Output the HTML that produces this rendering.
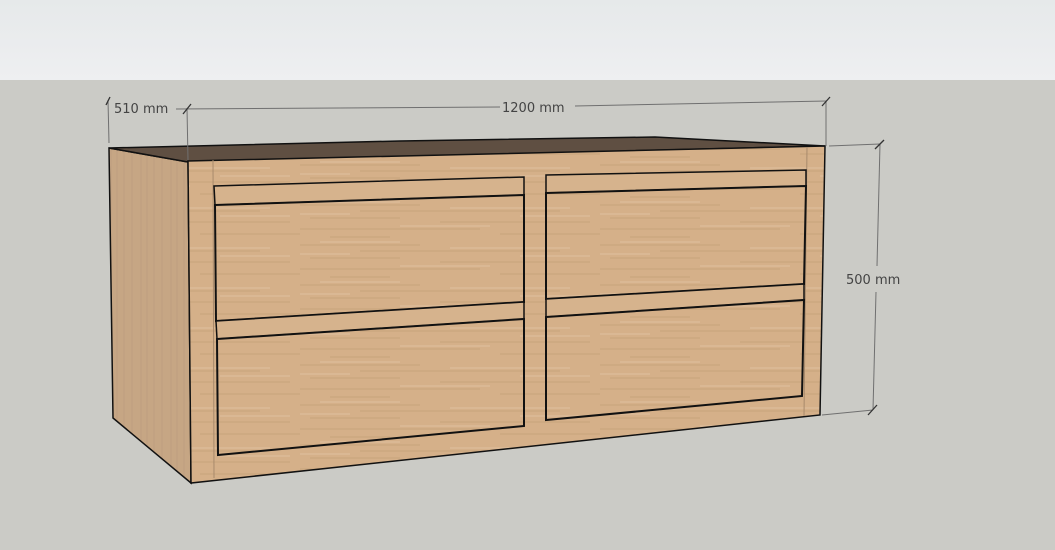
<!DOCTYPE html>
<html><head><meta charset="utf-8"><style>
html,body{margin:0;padding:0;width:1055px;height:550px;overflow:hidden;background:#cbcbc6}
svg{display:block}
text{font-family:"DejaVu Sans","Liberation Sans",sans-serif;font-size:13px;fill:#444}
</style></head><body>
<svg width="1055" height="550" viewBox="0 0 1055 550" xmlns="http://www.w3.org/2000/svg">
<defs>
<linearGradient id="sky" x1="0" y1="0" x2="0" y2="1"><stop offset="0" stop-color="#e6e9ea"/><stop offset="1" stop-color="#eeeff1"/></linearGradient>
<pattern id="grain" width="300" height="40" patternUnits="userSpaceOnUse">
<rect width="300" height="40" fill="#d5b089"/>
<path d="M0 5h120M60 11h200M10 18h90M140 22h150M0 29h180M200 34h100M30 37h60" stroke="#c49d76" stroke-width="1.5" opacity=".5"/>
<path d="M20 2h80M150 8h120M0 14h50M100 26h90M220 16h70" stroke="#e0c09c" stroke-width="1.5" opacity=".7"/>
</pattern>
<pattern id="vgrain" width="30" height="300" patternUnits="userSpaceOnUse">
<rect width="30" height="300" fill="#c6a684"/>
<path d="M4 0v300M12 0v300M21 0v300M27 0v300" stroke="#b8977a" stroke-width="1.2" opacity=".5"/>
</pattern>
</defs>
<rect width="1055" height="80" fill="url(#sky)"/>
<rect y="80" width="1055" height="470" fill="#cbcbc6"/>

<polygon points="109,148 188,162 191,483 113,418" fill="url(#vgrain)" stroke="#111" stroke-width="1.5"/>
<polygon points="109,148 400,141 655,137 825,146 188,162" fill="#5f4f42" stroke="#111" stroke-width="1.5"/>
<polygon points="188,161 825,146 820,415 191,483" fill="url(#grain)" stroke="#111" stroke-width="1.5"/>
<g fill="none" stroke="#a88a6c" stroke-width="1"><line x1="213" y1="160" x2="214" y2="478"/><line x1="807" y1="147" x2="804" y2="416"/></g>

<polygon points="214,186 524,177 524,195 215,205" fill="#d6b38d" stroke="#111" stroke-width="1.5"/>
<polygon points="215,205 524,195 524,302 216,321" fill="url(#grain)" stroke="#111" stroke-width="2"/>
<polygon points="216,321 524,302 524,319 217,339" fill="#d6b38d" stroke="#111" stroke-width="1.5"/>
<polygon points="217,339 524,319 524,426 218,455" fill="url(#grain)" stroke="#111" stroke-width="2"/>
<polygon points="546,175 806,170 806,186 546,193" fill="#d6b38d" stroke="#111" stroke-width="1.5"/>
<polygon points="546,193 806,186 804,284 546,299" fill="url(#grain)" stroke="#111" stroke-width="2"/>
<polygon points="546,299 804,284 804,300 546,317" fill="#d6b38d" stroke="#111" stroke-width="1.5"/>
<polygon points="546,317 804,300 802,396 546,420" fill="url(#grain)" stroke="#111" stroke-width="2"/>

<g stroke="#707070" stroke-width="1" fill="none">
<line x1="108" y1="100" x2="109" y2="143"/>
<line x1="187" y1="108" x2="188" y2="160"/>
<line x1="176" y1="109" x2="500" y2="107"/>
<line x1="575" y1="106" x2="827" y2="101"/>
<line x1="826" y1="101" x2="826" y2="146"/>
<line x1="829" y1="146" x2="880" y2="144"/>
<line x1="880" y1="144" x2="877" y2="266"/>
<line x1="876" y1="292" x2="873" y2="410"/>
<line x1="822" y1="415" x2="873" y2="410"/>
</g>
<g stroke="#333" stroke-width="1.3">
<line x1="106" y1="105" x2="110" y2="97"/>
<line x1="183" y1="114" x2="191" y2="104"/>
<line x1="822" y1="106" x2="830" y2="97"/>
<line x1="875" y1="149" x2="884" y2="140"/>
<line x1="868" y1="415" x2="877" y2="405"/>
</g>
<text x="114" y="113">510 mm</text>
<text x="502" y="112">1200 mm</text>
<text x="846" y="284">500 mm</text>
</svg>
</body></html>
